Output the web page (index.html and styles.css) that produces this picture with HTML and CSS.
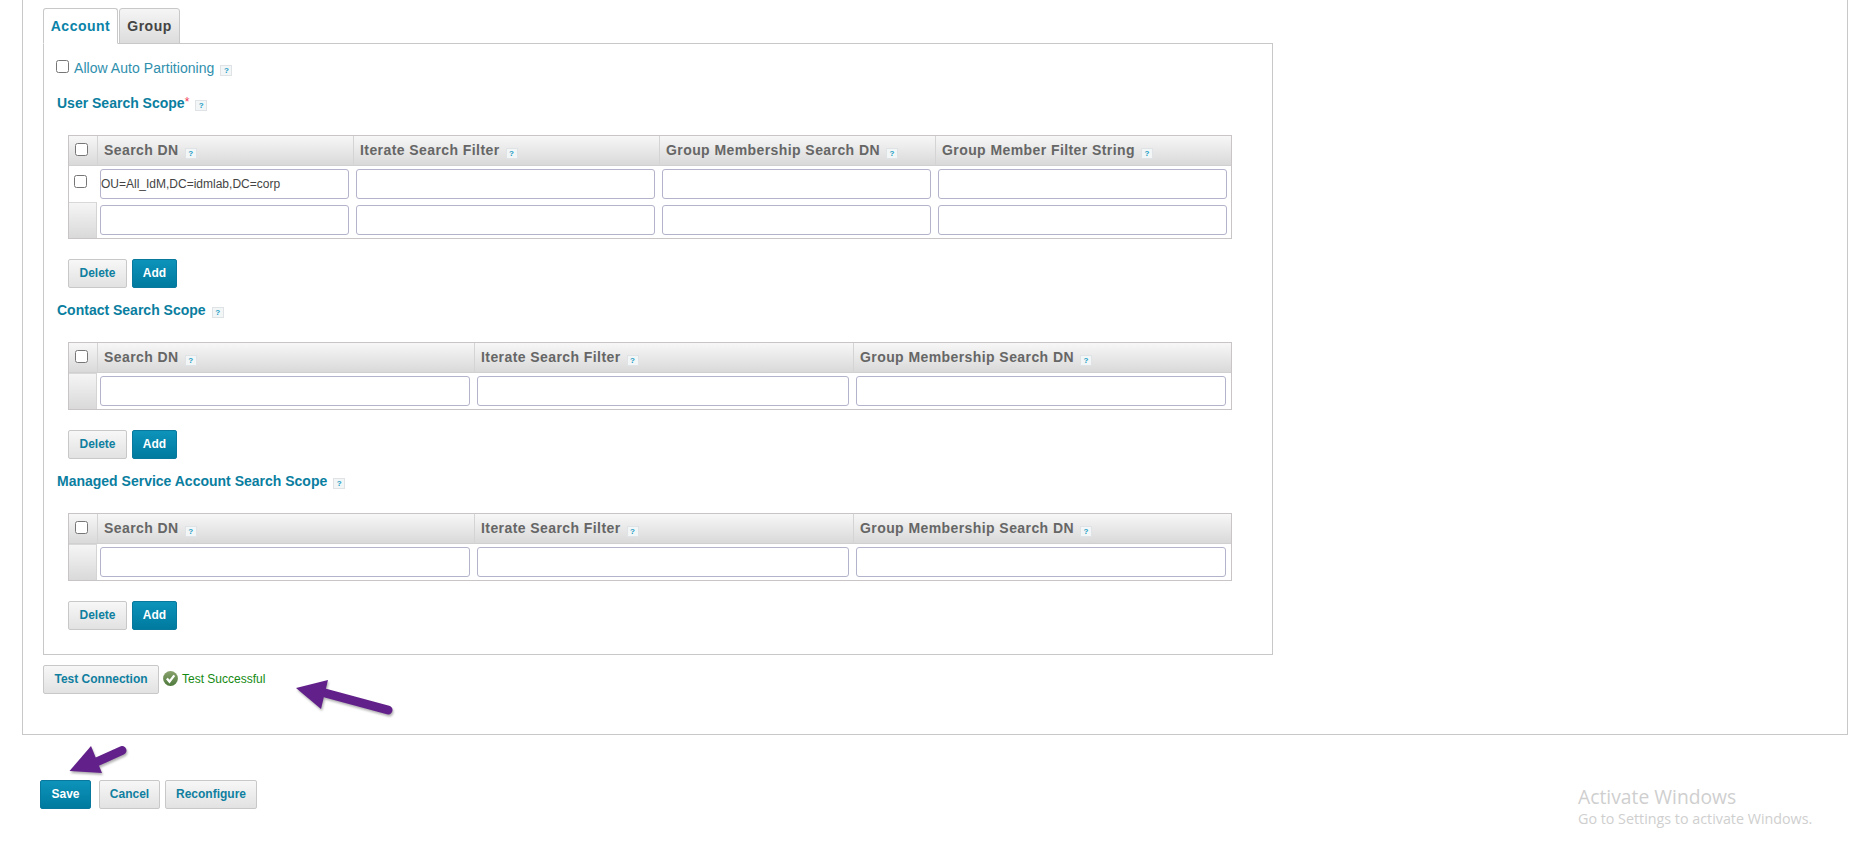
FILE: index.html
```html
<!DOCTYPE html>
<html lang="en">
<head>
<meta charset="utf-8">
<title>Directory Configuration</title>
<link rel="stylesheet" href="styles.css">
</head>
<body>
<main class="page">
  <section class="outer">
    <div class="tabs">
      <div class="tab tab-active">Account</div>
      <div class="tab tab-group">Group</div>
    </div>
    <div class="panel">
      <div class="auto-row">
        <input type="checkbox" class="check">
        <label class="auto-label">Allow Auto Partitioning</label>
        <span class="help">?</span>
      </div>

      <h3 class="scope scope-first">User Search Scope<span class="req">*</span><span class="help">?</span></h3>
      <table class="grid grid-four">
        <colgroup><col class="c-check"><col class="c4a"><col class="c4b"><col class="c4c"><col></colgroup>
        <thead>
          <tr>
            <th class="cell-check"><input type="checkbox" class="check"></th>
            <th>Search DN<span class="help">?</span></th>
            <th>Iterate Search Filter<span class="help">?</span></th>
            <th>Group Membership Search DN<span class="help">?</span></th>
            <th>Group Member Filter String<span class="help">?</span></th>
          </tr>
        </thead>
        <tbody>
          <tr>
            <td class="cell-check plain"><input type="checkbox" class="check"></td>
            <td><input type="text" class="field" value="OU=All_IdM,DC=idmlab,DC=corp"></td>
            <td><input type="text" class="field"></td>
            <td><input type="text" class="field"></td>
            <td><input type="text" class="field"></td>
          </tr>
          <tr>
            <td class="cell-check shaded"></td>
            <td><input type="text" class="field"></td>
            <td><input type="text" class="field"></td>
            <td><input type="text" class="field"></td>
            <td><input type="text" class="field"></td>
          </tr>
        </tbody>
      </table>
      <div class="actions">
        <button class="btn">Delete</button>
        <button class="btn btn-primary">Add</button>
      </div>

      <h3 class="scope">Contact Search Scope<span class="help">?</span></h3>
      <table class="grid grid-three">
        <colgroup><col class="c-check"><col class="c3a"><col class="c3b"><col></colgroup>
        <thead>
          <tr>
            <th class="cell-check"><input type="checkbox" class="check"></th>
            <th>Search DN<span class="help">?</span></th>
            <th>Iterate Search Filter<span class="help">?</span></th>
            <th>Group Membership Search DN<span class="help">?</span></th>
          </tr>
        </thead>
        <tbody>
          <tr>
            <td class="cell-check shaded"></td>
            <td><input type="text" class="field"></td>
            <td><input type="text" class="field"></td>
            <td><input type="text" class="field"></td>
          </tr>
        </tbody>
      </table>
      <div class="actions">
        <button class="btn">Delete</button>
        <button class="btn btn-primary">Add</button>
      </div>

      <h3 class="scope">Managed Service Account Search Scope<span class="help">?</span></h3>
      <table class="grid grid-three">
        <colgroup><col class="c-check"><col class="c3a"><col class="c3b"><col></colgroup>
        <thead>
          <tr>
            <th class="cell-check"><input type="checkbox" class="check"></th>
            <th>Search DN<span class="help">?</span></th>
            <th>Iterate Search Filter<span class="help">?</span></th>
            <th>Group Membership Search DN<span class="help">?</span></th>
          </tr>
        </thead>
        <tbody>
          <tr>
            <td class="cell-check shaded"></td>
            <td><input type="text" class="field"></td>
            <td><input type="text" class="field"></td>
            <td><input type="text" class="field"></td>
          </tr>
        </tbody>
      </table>
      <div class="actions">
        <button class="btn">Delete</button>
        <button class="btn btn-primary">Add</button>
      </div>
    </div>

    <div class="test-row">
      <button class="btn btn-test">Test Connection</button>
      <svg class="ok-icon" width="15" height="15" viewBox="0 0 15 15" aria-hidden="true">
        <defs>
          <linearGradient id="okFill" x1="0" y1="0" x2="0" y2="1">
            <stop offset="0" stop-color="#8aa26e"/>
            <stop offset="1" stop-color="#4f7a3c"/>
          </linearGradient>
        </defs>
        <circle cx="7.5" cy="7.5" r="7.4" fill="url(#okFill)"/>
        <path d="M3.9 7.4 6.5 10.6 11.3 4.4" fill="none" stroke="#fff" stroke-width="2.3"/>
      </svg>
      <span class="ok-text">Test Successful</span>
    </div>
  </section>

  <div class="footer">
    <button class="btn btn-primary btn-save">Save</button>
    <button class="btn btn-cancel">Cancel</button>
    <button class="btn btn-reconf">Reconfigure</button>
  </div>
</main>

<svg class="arrow arrow-test" width="104" height="42" viewBox="0 0 104 42" aria-hidden="true">
  <path d="M1 10 33 2 26 31Z" fill="#62218a"/>
  <path d="M30 15 93 32" stroke="#62218a" stroke-width="9" stroke-linecap="round"/>
</svg>
<svg class="arrow arrow-save" width="66" height="36" viewBox="0 0 66 36" aria-hidden="true">
  <path d="M0.5 27 22 2 33 29Z" fill="#62218a"/>
  <path d="M23 20 53 6.500" stroke="#62218a" stroke-width="9" stroke-linecap="round"/>
</svg>

<div class="watermark">
  <div class="wm-title">Activate Windows</div>
  <div class="wm-sub">Go to Settings to activate Windows.</div>
</div>
</body>
</html>
```

FILE: styles.css
```css
* { box-sizing: border-box; }
html, body { margin: 0; padding: 0; background: #fff; }
body {
  width: 1849px;
  height: 842px;
  overflow: hidden;
  position: relative;
  font-family: "Liberation Sans", Arial, sans-serif;
  color: #333;
}
.page { display: flex; flex-direction: column; }

.outer {
  margin-left: 22px;
  margin-right: 1px;
  height: 735px;
  border: 1px solid #c8c8c8;
  border-top: 0;
  padding: 8px 0 0 20px;
}

.tabs { display: flex; gap: 1px; height: 36px; position: relative; z-index: 1; }
.tab {
  height: 36px;
  width: 61px;
  border: 1px solid #c8c8c8;
  border-radius: 3px 3px 0 0;
  background: linear-gradient(#f5f5f5, #dcdcdc);
  font-size: 14px;
  font-weight: bold;
  line-height: 35px;
  text-align: center;
  color: #444;
  letter-spacing: 0.5px;
}
.tab-active {
  width: 75px;
  background: #fff;
  border-bottom-color: #fff;
  color: #0a83a8;
  line-height: 34px;
}

.panel {
  width: 1230px;
  height: 612px;
  margin-top: -1px;
  border: 1px solid #c8c8c8;
  padding: 16px 0 0 12px;
}

.check {
  display: block;
  width: 13px;
  height: 13px;
  margin: 0;
}

.auto-row { display: flex; align-items: flex-start; height: 20px; }
.auto-label { margin-left: 5px; font-size: 14px; line-height: 17px; color: #2f8fad; letter-spacing: 0.05px; }
.auto-row .help { margin-top: 5px; }

.help {
  display: inline-block;
  width: 12px;
  height: 11px;
  margin-left: 6px;
  border: 1px solid #dfe3e5;
  background: #f2f6f7;
  color: #1a9cc4;
  font-size: 8px;
  font-weight: bold;
  line-height: 10px;
  letter-spacing: 0;
  text-align: center;
  vertical-align: 0;
}

.scope {
  margin: 0 0 0 1px;
  height: 40px;
  font-size: 14px;
  font-weight: bold;
  line-height: 17px;
  color: #0a7e9f;
}
.scope-first { margin-top: 14px; height: 41px; }
.req { color: #f0405a; font-weight: normal; font-size: 12px; vertical-align: 2px; }

.grid {
  width: 1164px;
  margin-left: 12px;
  table-layout: fixed;
  border-collapse: separate;
  border-spacing: 0;
  border: 1px solid #c9c5c7;
}
.c-check { width: 28px; }
.c4a { width: 256px; }
.c4b { width: 306px; }
.c4c { width: 276px; }
.c3a { width: 377px; }
.c3b { width: 379px; }

.grid th {
  height: 30px;
  padding: 0 0 0 6px;
  border-left: 1px solid #d4d4d4;
  border-bottom: 1px solid #d0d0d0;
  background: linear-gradient(#f7f7f7, #d9d9d9);
  font-size: 14px;
  font-weight: bold;
  color: #666;
  text-align: left;
  letter-spacing: 0.42px;
  white-space: nowrap;
}
.grid th:first-child { border-left: 0; }
.grid th.cell-check { padding: 0 0 3px 6px; }
.grid th .help { margin-left: 6px; vertical-align: -1px; }
.grid td {
  height: 36px;
  padding: 0 4px 0 3px;
  vertical-align: middle;
}
.grid td.cell-check { padding: 0; }
.grid td.plain { padding: 0 0 5px 5px; }
.grid td.shaded {
  background: linear-gradient(#f5f5f5, #d9d9d9);
  border-top: 1px solid #d8d8d8;
  border-right: 1px solid #d4d4d4;
}
.grid-three td:last-child { padding-right: 5px; }
.field {
  display: block;
  width: 100%;
  height: 30px;
  padding: 0;
  border: 1px solid #b3b3cb;
  border-radius: 3px;
  background: #fff;
  font-family: "Liberation Sans", Arial, sans-serif;
  font-size: 12px;
  color: #444;
  outline: 0;
}

.actions {
  display: flex;
  gap: 5px;
  margin: 20px 0 0 12px;
  height: 43px;
}

.btn {
  height: 29px;
  padding: 0 10px 2px;
  border: 1px solid #c8c8c8;
  border-radius: 2px;
  background: linear-gradient(#f7f7f7, #e2e2e2);
  font-family: "Liberation Sans", Arial, sans-serif;
  font-size: 12px;
  font-weight: bold;
  color: #0f7fa0;
  cursor: pointer;
}
.actions .btn { width: 59px; padding: 0 0 2px; }
.actions .btn-primary { width: 45px; }
.btn-primary {
  border-color: #08789c;
  background: linear-gradient(#0d93ba, #007a9f);
  color: #fff;
}

.test-row { display: flex; align-items: center; margin-top: 10px; height: 29px; }
.btn-test { width: 116px; padding: 0 0 2px; }
.ok-icon { margin: 0 4px 2px 4px; }
.ok-text { font-size: 12px; color: #158a12; margin-bottom: 2px; }

.footer {
  display: flex;
  margin: 45px 0 0 40px;
}
.btn-save { width: 51px; padding: 0 0 2px; }
.btn-cancel { width: 61px; padding: 0 0 2px; margin-left: 8px; }
.btn-reconf { width: 92px; padding: 0 0 2px; margin-left: 5px; }

.arrow { position: absolute; filter: drop-shadow(1px 2px 1px rgba(0,0,0,0.3)); }
.arrow-test { left: 295px; top: 678px; }
.arrow-save { left: 69px; top: 744px; }

.watermark {
  position: absolute;
  left: 1578px;
  top: 785px;
  font-family: "Open Sans", "Liberation Sans", sans-serif;
  color: #cfcfcf;
}
.wm-title { font-size: 19.3px; line-height: 24px; }
.wm-sub { font-size: 14.3px; line-height: 20px; }
```
